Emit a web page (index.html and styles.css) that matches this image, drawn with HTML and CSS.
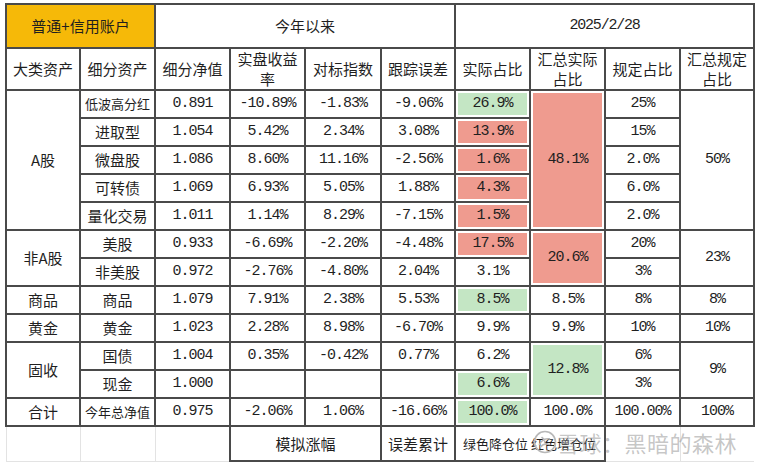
FILE: index.html
```html
<!DOCTYPE html>
<html lang="zh">
<head>
<meta charset="utf-8">
<title>资产配置表</title>
<link rel="stylesheet" href="styles.css">
</head>
<body>
<div class="sheet">
  <table class="grid">
    <colgroup>
      <col class="w74"><col class="w75"><col class="w75"><col class="w75"><col class="w76">
      <col class="w74"><col class="w75"><col class="w75"><col class="w75"><col class="w74">
    </colgroup>
    <tr class="h1">
      <td colspan="2" class="acct">普通+信用账户</td>
      <td colspan="4">今年以来</td>
      <td colspan="4" class="date">2025/2/28</td>
    </tr>
    <tr class="h2">
      <td>大类资产</td><td>细分资产</td><td>细分净值</td><td>实盘收益率</td><td>对标指数</td>
      <td>跟踪误差</td><td>实际占比</td><td>汇总实际占比</td><td>规定占比</td><td>汇总规定占比</td>
    </tr>
    <tr class="d">
      <td rowspan="5" class="zh">A股</td><td class="zh sm">低波高分红</td>
      <td>0.891</td><td>-10.89%</td><td>-1.83%</td><td>-9.06%</td>
      <td class="g">26.9%</td><td rowspan="5" class="r">48.1%</td><td>25%</td><td rowspan="5">50%</td>
    </tr>
    <tr class="d">
      <td class="zh">进取型</td><td>1.054</td><td>5.42%</td><td>2.34%</td><td>3.08%</td>
      <td class="r">13.9%</td><td>15%</td>
    </tr>
    <tr class="d">
      <td class="zh">微盘股</td><td>1.086</td><td>8.60%</td><td>11.16%</td><td>-2.56%</td>
      <td class="r">1.6%</td><td>2.0%</td>
    </tr>
    <tr class="d">
      <td class="zh">可转债</td><td>1.069</td><td>6.93%</td><td>5.05%</td><td>1.88%</td>
      <td class="r">4.3%</td><td>6.0%</td>
    </tr>
    <tr class="d">
      <td class="zh">量化交易</td><td>1.011</td><td>1.14%</td><td>8.29%</td><td>-7.15%</td>
      <td class="r">1.5%</td><td>2.0%</td>
    </tr>
    <tr class="d">
      <td rowspan="2" class="zh">非A股</td><td class="zh">美股</td>
      <td>0.933</td><td>-6.69%</td><td>-2.20%</td><td>-4.48%</td>
      <td class="r">17.5%</td><td rowspan="2" class="r">20.6%</td><td>20%</td><td rowspan="2">23%</td>
    </tr>
    <tr class="d">
      <td class="zh">非美股</td><td>0.972</td><td>-2.76%</td><td>-4.80%</td><td>2.04%</td>
      <td>3.1%</td><td>3%</td>
    </tr>
    <tr class="d">
      <td class="zh">商品</td><td class="zh">商品</td>
      <td>1.079</td><td>7.91%</td><td>2.38%</td><td>5.53%</td>
      <td class="g">8.5%</td><td>8.5%</td><td>8%</td><td>8%</td>
    </tr>
    <tr class="d">
      <td class="zh">黄金</td><td class="zh">黄金</td>
      <td>1.023</td><td>2.28%</td><td>8.98%</td><td>-6.70%</td>
      <td>9.9%</td><td>9.9%</td><td>10%</td><td>10%</td>
    </tr>
    <tr class="d">
      <td rowspan="2" class="zh">固收</td><td class="zh">国债</td>
      <td>1.004</td><td>0.35%</td><td>-0.42%</td><td>0.77%</td>
      <td>6.2%</td><td rowspan="2" class="g">12.8%</td><td>6%</td><td rowspan="2">9%</td>
    </tr>
    <tr class="d">
      <td class="zh">现金</td><td>1.000</td><td></td><td></td><td></td>
      <td class="g">6.6%</td><td>3%</td>
    </tr>
    <tr class="d">
      <td class="zh">合计</td><td class="zh sm">今年总净值</td>
      <td>0.975</td><td>-2.06%</td><td>1.06%</td><td>-16.66%</td>
      <td class="g">100.0%</td><td>100.0%</td><td>100.00%</td><td>100%</td>
    </tr>
    <tr class="ft">
      <td class="e"></td><td class="e"></td><td class="e"></td>
      <td colspan="2" class="zh">模拟涨幅</td>
      <td class="zh">误差累计</td>
      <td colspan="2" class="zh note">绿色降仓位 红色增仓位</td>
      <td class="e"></td><td class="e"></td>
    </tr>
  </table>
  <div class="watermark">
    <svg class="wm-logo" viewBox="0 0 24 24" width="24" height="26" aria-hidden="true">
      <circle cx="12" cy="12" r="10.5" fill="none" stroke="#b8b8b8" stroke-width="1.6"/>
      <path d="M6.5 14.5c1.5-4 6-6.5 10-5.5M7.5 17c2-2.5 5.5-3.5 9-2.5M9 7.5c1.5 1 2.5 2.5 3 4.5" fill="none" stroke="#b8b8b8" stroke-width="1.6" stroke-linecap="round"/>
    </svg>
    <span class="wm-text">雪球：黑暗的森林</span>
  </div>
</div>
</body>
</html>
```

FILE: styles.css
```css
html, body {
  margin: 0;
  padding: 0;
  background: #ffffff;
}

.sheet {
  position: relative;
  width: 759px;
  height: 466px;
  padding: 3px 0 0 5px;
  box-sizing: border-box;
}

.grid {
  border-collapse: collapse;
  table-layout: fixed;
  width: 748px;
  color: #1f1f1f;
  font-family: "Liberation Mono", "Noto Sans CJK SC", monospace;
  font-size: 15px;
  letter-spacing: -1px;
}

.w74 { width: 74px; }
.w75 { width: 75px; }
.w76 { width: 76px; }

.grid td {
  border: 2px solid #4a4a4a;
  padding: 0 4px;
  text-align: center;
  vertical-align: middle;
  line-height: 20px;
  white-space: normal;
}

.h1 { height: 44px; }
.h2 { height: 42px; }
.d  { height: 28px; }
.ft { height: 35px; }

.h1 td, .h2 td, .grid td.zh {
  font-family: "Noto Sans CJK SC", "Liberation Sans", sans-serif;
  font-size: 15px;
  letter-spacing: 0;
  line-height: 20px;
}

.h1 td.date {
  font-family: "Liberation Mono", monospace;
  font-size: 15px;
  letter-spacing: -1.2px;
}

.h1 td.acct {
  background: #f6b908;
}

.grid td.sm {
  font-size: 13px;
  padding: 0 2px;
}

.grid td.g {
  background: #c4e6c4;
  box-shadow: inset 0 0 0 2px #ffffff;
}

.grid td.r {
  background: #ef9b8f;
  box-shadow: inset 0 0 0 2px #ffffff;
}

.grid td.e {
  border-top: none;
  border-right: none;
  border-left: 1px solid #e3e3e3;
  border-bottom: 1px solid #e3e3e3;
}

.grid td.note {
  text-align: left;
  font-size: 13px;
  padding-left: 7px;
  white-space: nowrap;
}

.watermark {
  position: absolute;
  left: 533px;
  top: 428px;
  display: flex;
  align-items: center;
  pointer-events: none;
}

.wm-logo {
  display: block;
}

.wm-text {
  font-family: "Noto Sans CJK SC", sans-serif;
  font-size: 22px;
  line-height: 28px;
  color: rgba(150, 150, 150, 0.55);
  letter-spacing: 0.5px;
}
```
